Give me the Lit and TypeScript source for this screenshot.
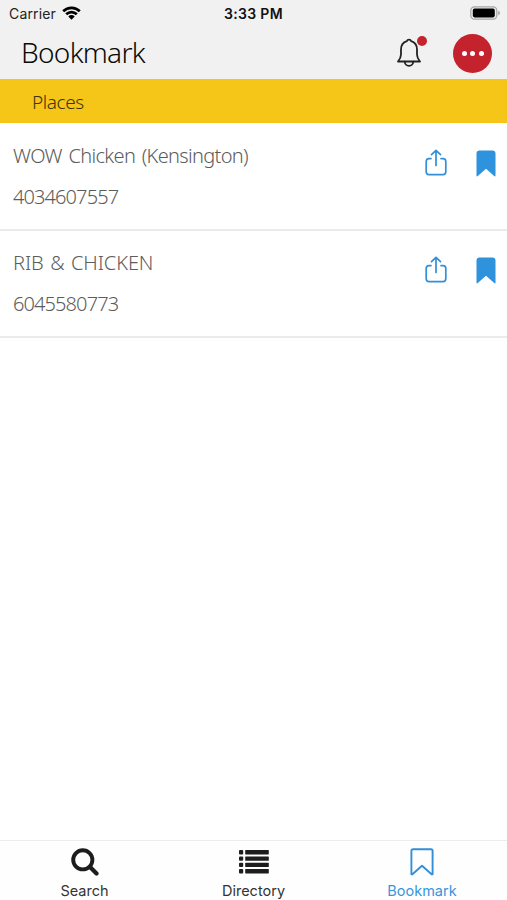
import { LitElement, html, css, svg } from "lit";
import { customElement, property } from "lit/decorators.js";

const shapes: Record<string, { w: number; h: number; art: unknown }> = {
  wifi: {
    w: 19, h: 14,
    art: svg`<g fill="none" stroke="#000" stroke-width="2.7"><path d="M1.2 5.2A11.8 11.8 0 0 1 17.8 5.2"/><path d="M4.2 8.3A7.6 7.6 0 0 1 14.8 8.3"/></g><path fill="#000" d="M6.3 10.4a4.6 4.6 0 0 1 6.4 0L9.5 13.7z"/>`,
  },
  battery: {
    w: 31, h: 14,
    art: svg`<rect x=".8" y=".8" width="26" height="12.4" rx="3.6" fill="#ededed" stroke="#a6a6a6" stroke-width="1.2"/><rect x="2.8" y="2.6" width="22" height="8.8" rx="1.8" fill="#000"/><path d="M28.2 4.8c2.4.8 2.4 3.6 0 4.4z" fill="#a6a6a6"/>`,
  },
  bell: {
    w: 26, h: 30,
    art: svg`<g fill="none" stroke="#222" stroke-width="1.8" stroke-linejoin="round" stroke-linecap="round"><path d="M10.9 3.1C11.4 1 14.6 1 15.1 3.1C19 4.3 21 7.5 21 11.4V16.5C21 19.6 22 21 24 23.5H2C4 21 5 19.6 5 16.5V11.4C5 7.5 7 4.3 10.9 3.1z"/><path d="M8.8 23.7a4.2 4.2 0 0 0 8.4 0"/></g>`,
  },
  share: {
    w: 22, h: 28,
    art: svg`<g fill="none" stroke="#328fd8" stroke-width="1.7" stroke-linecap="round" stroke-linejoin="round"><path d="M6 9.6H4Q1.2 9.6 1.2 12.4V22.8Q1.2 25.6 4 25.6H18Q20.8 25.6 20.8 22.8V12.4Q20.8 9.6 18 9.6H16"/><path d="M11 16.5V1.4M6.5 5.6L11 1.3L15.5 5.6"/></g>`,
  },
  saved: {
    w: 20, h: 27,
    art: svg`<path fill="#2f92dc" d="M3.6.5H16.4Q19.5.5 19.5 3.6V25.5Q19.5 27 18.2 26L10 18.8L1.8 26Q.5 27 .5 25.5V3.6Q.5.5 3.6.5z"/>`,
  },
  search: {
    w: 28, h: 28,
    art: svg`<circle cx="11.8" cy="11.8" r="9.6" fill="none" stroke="#1d1d1d" stroke-width="3.9"/><path d="M19 19L25.5 25.5" stroke="#1d1d1d" stroke-width="4.3" stroke-linecap="round"/>`,
  },
  list: {
    w: 30, h: 24,
    art: svg`<g fill="#1d1d1d">${[0, 6.4, 12.7, 19].map((y) => svg`<rect x="0" y=${y} width="4.2" height="4.4" rx="1"/><rect x="6.2" y=${y} width="23.6" height="4.4" rx=".6"/>`)}</g>`,
  },
  bookmark: {
    w: 24, h: 28,
    art: svg`<path fill="none" stroke="#328fd8" stroke-width="1.9" stroke-linejoin="round" d="M3 1.2H21Q22.6 1.2 22.6 2.8V26.3H21.6L12 17.8L2.4 26.3H1.4V2.8Q1.4 1.2 3 1.2z"/>`,
  },
};

@customElement("ui-icon")
class UiIcon extends LitElement {
  @property() name = "";
  static styles = css`:host { display: block; flex: none; } svg { display: block; }`;
  render() {
    const s = shapes[this.name];
    return html`<svg width=${s.w} height=${s.h} viewBox="0 0 ${s.w} ${s.h}">${s.art}</svg>`;
  }
}

@customElement("place-row")
class PlaceRow extends LitElement {
  @property() name = "";
  @property() phone = "";
  static styles = css`
    :host { display: flex; box-sizing: border-box; height: 107px; padding: 0 11px 0 13px; border-bottom: 2px solid #ebebeb; color: #5c5c5c; font: 300 20px/40px "Noto Sans", sans-serif; }
    .text { flex: 1; padding-top: 12px; white-space: nowrap; }
    .name { height: 41px; letter-spacing: var(--name-spacing, 0); word-spacing: var(--name-word-spacing, 0); }
    .phone { letter-spacing: -0.9px; }
    .actions { display: flex; gap: 29px; padding-top: 25px; height: 28px; }
    .flag { padding-top: 1px; }
  `;
  render() {
    return html`
      <div class="text"><div class="name">${this.name}</div><div class="phone">${this.phone}</div></div>
      <div class="actions"><ui-icon name="share"></ui-icon><ui-icon class="flag" name="saved"></ui-icon></div>`;
  }
}

@customElement("app-root")
class AppRoot extends LitElement {
  static styles = css`
    :host { display: flex; flex-direction: column; width: 507px; height: 900px; background: #fff; font-family: Inter, sans-serif; overflow: hidden; }
    .top { height: 79px; background: #f1f1f1; }
    .status { display: grid; grid-template-columns: 1fr auto 1fr; align-items: center; height: 26px; padding: 0 6px 0 9px; box-sizing: border-box; font-size: 14px; color: #222; }
    .carrier { display: flex; align-items: center; gap: 6px; letter-spacing: 0.15px; }
    .time { font-weight: 600; color: #111; letter-spacing: 0.3px; margin-right: 3px; }
    .battery { justify-self: end; }
    .bar { display: flex; align-items: center; height: 54px; padding: 0 15px 0 21px; }
    .title { flex: 1; font: 300 28px/50px "Noto Sans", sans-serif; letter-spacing: -0.7px; color: #0a0a0a; padding-bottom: 2px; }
    .alerts { position: relative; margin-right: 31px; }
    .badge { position: absolute; left: 20.5px; top: -2px; width: 10px; height: 10px; border-radius: 50%; background: #c7232f; }
    .more { display: flex; align-items: center; justify-content: center; gap: 3.5px; width: 39px; height: 39px; border-radius: 50%; background: #c4222d; }
    .dot { width: 5px; height: 5px; border-radius: 50%; background: #fff; }
    .section { height: 44px; padding-left: 32px; background: #f5c518; color: #3d340a; font: 300 19px/46px "Noto Sans", sans-serif; letter-spacing: -0.4px; }
    .list { flex: 1; padding-top: 1px; }
    .first { --name-spacing: -0.67px; --name-word-spacing: 2px; }
    .second { --name-spacing: -0.1px; --name-word-spacing: 1.5px; }
    .tabs { display: grid; grid-template-columns: repeat(3, 1fr); height: 60px; box-sizing: border-box; border-top: 1px solid #ececec; background: #fefefe; }
    .tab { display: flex; flex-direction: column; align-items: center; color: #333; font-size: 14.5px; line-height: 18px; }
    .glyph { display: flex; align-items: center; height: 28px; padding: 7px 0 6px; }
    .active { color: #3a96dc; padding-right: 1px; }
  `;
  render() {
    return html`
      <header class="top">
        <div class="status">
          <div class="carrier">Carrier <ui-icon name="wifi"></ui-icon></div>
          <div class="time">3:33 PM</div>
          <ui-icon class="battery" name="battery"></ui-icon>
        </div>
        <div class="bar">
          <div class="title">Bookmark</div>
          <div class="alerts"><ui-icon name="bell"></ui-icon><span class="badge"></span></div>
          <div class="more"><span class="dot"></span><span class="dot"></span><span class="dot"></span></div>
        </div>
      </header>
      <div class="section">Places</div>
      <main class="list">
        <place-row class="first" name="WOW Chicken (Kensington)" phone="4034607557"></place-row>
        <place-row class="second" name="RIB &amp; CHICKEN" phone="6045580773"></place-row>
      </main>
      <nav class="tabs">
        <div class="tab"><div class="glyph"><ui-icon name="search"></ui-icon></div>Search</div>
        <div class="tab"><div class="glyph"><ui-icon name="list"></ui-icon></div>Directory</div>
        <div class="tab active"><div class="glyph"><ui-icon name="bookmark"></ui-icon></div>Bookmark</div>
      </nav>`;
  }
}
